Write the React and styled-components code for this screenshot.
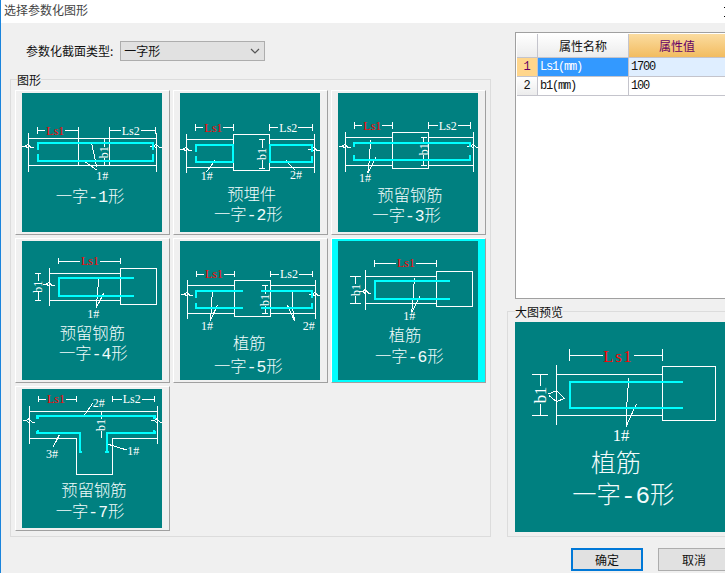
import React from "react";
import styled, { createGlobalStyle } from "styled-components";

const Global = createGlobalStyle`
  html, body { margin: 0; padding: 0; background: #f0f0f0; }
  * { box-sizing: border-box; }
`;

const UI_FONT = `"Noto Sans CJK SC", "Liberation Sans", sans-serif`;
const DRAW_FONT = `"Liberation Serif", "Noto Sans CJK SC", serif`;

const Page = styled.div`
  width: 725px;
  height: 573px;
  overflow: hidden;
`;
const Dialog = styled.div`
  width: 736px;
  height: 573px;
  display: flex;
  flex-direction: column;
  background: #f0f0f0;
  border-left: 1px solid #1a84dc;
  font: 12px/16px ${UI_FONT};
  color: #111;
`;
const TitleBar = styled.div`
  height: 23px;
  flex: none;
  background: #fff;
  display: flex;
  align-items: center;
  justify-content: space-between;
  padding: 0 2px 3px 3px;
  color: #444;
`;
const CloseIcon = styled.svg`
  width: 10px;
  height: 10px;
  margin-top: 4px;
`;
const Body = styled.div`
  display: flex;
  height: 514px;
  flex: none;
`;
const LeftPane = styled.div`
  width: 481px;
  margin-left: 9px;
  display: flex;
  flex-direction: column;
`;
const TypeRow = styled.div`
  display: flex;
  align-items: flex-start;
  gap: 7px;
  padding: 18px 0 0 16px;
  height: 49px;
  flex: none;
`;
const TypeLabel = styled.span`
  line-height: 20px;
`;
const Combo = styled.div`
  width: 145px;
  height: 20px;
  background: #e1e1e1;
  border: 1px solid #adadad;
  display: flex;
  align-items: center;
  justify-content: space-between;
  padding: 0 4px 0 3px;
`;
const Group = styled.fieldset`
  margin: 0;
  min-width: 0;
  border: 1px solid #dcdcdc;
  height: ${(p) => p.$h}px;
  padding: ${(p) => p.$pad};
  width: 100%;
`;
const GroupTitle = styled.legend`
  padding: 0;
  margin-left: ${(p) => p.$ml}px;
  line-height: 15px;
  font-size: 12px;
  color: #111;
`;
const Grid = styled.div`
  display: grid;
  grid-template-columns: repeat(3, 155px);
  grid-auto-rows: 145px;
  gap: 3px;
`;
const Card = styled.div`
  padding: 2px 7px 2px 6px;
  border: 1px solid #a0a0a0;
  border-top-color: #fff;
  border-left-color: #fff;
  background: ${(p) => (p.$active ? "#00ffff" : "#f0f0f0")};
`;
const Canvas = styled.svg`
  display: block;
  background: #008080;
  width: ${(p) => p.$w}px;
  height: ${(p) => p.$h}px;
  shape-rendering: crispEdges;
`;
const Stroke = styled.path`
  fill: none;
  stroke: ${(p) => p.$color};
  stroke-width: ${(p) => p.$width};
`;
const Tag = styled.text`
  font-family: ${DRAW_FONT};
  font-size: ${(p) => p.$size}px;
  fill: ${(p) => p.$color};
  text-anchor: middle;
  dominant-baseline: central;
`;
const Caption = styled.text`
  font-family: "Liberation Mono", "Noto Sans CJK SC", monospace;
  font-weight: 300;
  font-size: ${(p) => p.$size}px;
  fill: #f2fbfb;
  text-anchor: middle;
`;
const RightPane = styled.div`
  margin-left: 16px;
  width: 219px;
  display: flex;
  flex-direction: column;
`;
const Table = styled.div`
  margin: 9px 0 0 8px;
  height: 267px;
  flex: none;
  border: 1px solid #a0a0a0;
  border-right: 0;
  background: #fff;
  padding: 1px 0 0 1px;
  display: grid;
  grid-template-columns: 21px 91px 1fr;
  grid-template-rows: 24px 19px 19px;
  align-content: start;
`;
const Cell = styled.div`
  display: flex;
  align-items: center;
  justify-content: ${(p) => (p.$center ? "center" : "flex-start")};
  border-right: 1px solid #c4c4cc;
  border-bottom: 1px solid #c4c4cc;
  padding-left: ${(p) => (p.$center ? 0 : 2)}px;
  font-family: "Liberation Mono", "Noto Sans CJK SC", monospace;
  font-size: 12px;
  letter-spacing: ${(p) => (p.$center ? 0 : -1.2)}px;
  color: ${(p) => p.$color || "#111"};
  background: ${(p) => p.$bg || "#fff"};
`;
const HeadCell = styled.div`
  display: flex;
  align-items: center;
  justify-content: center;
  border-right: 1px solid #c4c4cc;
  border-bottom: 1px solid #c4c4cc;
  font-size: 12px;
  color: ${(p) => p.$color || "#111"};
  background: ${(p) => p.$bg};
`;
const PreviewGroup = styled(Group)`
  margin-top: 5px;
`;
const Footer = styled.div`
  flex: none;
  display: flex;
  gap: 15px;
  padding: 11px 0 0 570px;
`;
const Button = styled.div`
  width: 72px;
  height: 23px;
  background: #e1e1e1;
  display: flex;
  align-items: center;
  justify-content: center;
  border: ${(p) => (p.$primary ? "2px solid #0078d7" : "1px solid #adadad")};
`;

const hDim = (x1, x2, y, c, w, t = 10) =>
  `M${x1} ${y - t}V${y + t}M${x2} ${y - t}V${y + t}M${x1} ${y}H${c - w}M${c + w} ${y}H${x2}`;
const vDim = (x, y1, y2, c, w, t = 9) =>
  `M${x - t} ${y1}H${x + t}M${x - t} ${y2}H${x + t}M${x} ${y1}V${c - w}M${x} ${c + w}V${y2}`;
const brk = (x, y) =>
  `M${x - 19} ${y - 3}H${x - 9}L${x - 2} ${y - 8}L${x + 9} ${y + 2}H${x + 17}M${x - 9} ${y - 3}L${x - 2} ${y + 3}`;

const diagrams = [
  {
    white: [
      hDim(46, 170, 113, 100, 30), hDim(262, 399, 113, 326, 30),
      "M19 136H404M19 217H404M19 121V237M404 121V237M170 106V217M262 106V217",
      "M247 136V161M247 195V217",
      brk(19, 162), brk(404, 162),
      "M209 151L224 221M189 206L224 231",
    ],
    cyan: ["M47 170V149H394V170M47 182V203H394V182"],
    red: [[100, 113]],
    tags: [[326, 113, "Ls2"], [241, 249, "1#"]],
    rot: [[247, 178]],
    caption: [[204, 326, "一字-1形"]],
  },
  {
    white: [
      hDim(47, 161, 104, 100, 30), hDim(268, 398, 104, 325, 30),
      "M160 124H268V232H160ZM19 140H160M268 140H403M19 224H160M268 224H403M19 124V240M403 124V240",
      vDim(247, 138, 226, 183, 17),
      brk(19, 171), brk(403, 171),
      "M105 203L80 236M318 203L345 231",
    ],
    cyan: ["M47 178V155H158V207H47V190", "M395 178V155H270V207H395V190"],
    red: [[100, 104]],
    tags: [[325, 104, "Ls2"], [80, 249, "1#"], [348, 246, "2#"]],
    rot: [[247, 183]],
    caption: [[215, 320, "预埋件"], [205, 380, "一字-2形"]],
  },
  {
    white: [
      hDim(49, 164, 98, 103, 30), hDim(271, 398, 98, 329, 30),
      "M163 118H272V226H163ZM22 133H163M272 133H407M22 217H163M272 217H407M22 118V236M407 118V236",
      vDim(257, 133, 217, 169, 17),
      brk(22, 162), brk(407, 162),
      "M97 141L95 196L89 241M113 193L89 241",
    ],
    cyan: ["M48 161V150H397V161M48 186V200H397V186"],
    red: [[103, 98]],
    tags: [[329, 98, "Ls2"], [81, 254, "1#"]],
    rot: [[257, 169]],
    caption: [[216, 323, "预留钢筋"], [206, 385, "一字-3形"]],
  },
  {
    white: [
      hDim(110, 295, 60, 204, 30),
      "M295 82H403V190H295ZM82 97H295M82 178H295M82 81V196",
      vDim(49, 97, 178, 137, 17),
      brk(82, 132),
      "M230 107L227 157L222 202M245 157L222 202",
    ],
    cyan: ["M336 110H110V164H336"],
    red: [[204, 60]],
    tags: [[214, 219, "1#"]],
    rot: [[49, 137]],
    caption: [[211, 293, "预留钢筋"], [214, 353, "一字-4形"]],
  },
  {
    white: [
      hDim(50, 163, 99, 102, 30), hDim(272, 398, 99, 327, 30),
      "M163 118H271V226H163ZM22 133H163M271 133H406M22 218H163M271 218H406M22 118V235M406 118V235",
      vDim(255, 133, 218, 177, 17),
      brk(22, 162), brk(406, 162),
      "M97 150L94 207L90 240M113 192L90 240M337 150V197L344 240M322 192L344 240",
    ],
    cyan: ["M47 172V150H188M47 186V200H188", "M243 150H397V172M243 200H397V186"],
    red: [[102, 99]],
    tags: [[327, 99, "Ls2"], [81, 254, "1#"], [386, 254, "2#"]],
    rot: [[255, 177]],
    caption: [[208, 323, "植筋"], [205, 393, "一字-5形"]],
  },
  {
    white: [
      hDim(109, 296, 67, 204, 30),
      "M295 91H404V197H295ZM83 106H295M83 188H295M83 87V206",
      vDim(53, 106, 188, 147, 17, 16),
      brk(83, 154),
      "M229 110L226 167L221 214M246 165L221 214",
    ],
    cyan: ["M335 119H110V173H335"],
    red: [[204, 67]],
    tags: [[214, 224, "1#"]],
    rot: [[53, 147]],
    caption: [[201, 301, "植筋"], [214, 364, "一字-6形"]],
  },
  {
    white: [
      hDim(50, 164, 30, 102, 30), hDim(272, 398, 30, 329, 30),
      "M22 67H406M22 148H164M272 148H406M22 52V166M406 52V166M164 148V256H272V148",
      "M238 67V90M238 126V148",
      brk(22, 98), brk(406, 98),
      "M186 80L212 43M112 138L94 173M259 166L314 183",
    ],
    cyan: [
      "M44 90V80H400V90", "M44 125V133H174V193", "M400 125V133H254V193",
      "M170 190H180M250 190H260", "M44 86H52M392 86H400M44 127H52M392 127H400",
    ],
    red: [[102, 30]],
    tags: [[329, 30, "Ls2"], [230, 41, "2#"], [90, 195, "3#"], [334, 185, "1#"]],
    rot: [[238, 108]],
    caption: [[216, 322, "预留钢筋"], [204, 384, "一字-7形"]],
  },
];

const big = {
  white: [
    hDim(164, 442, 100, 310, 46, 18),
    "M442 133H602V295H442ZM125 157H442M125 280H442M125 129V309",
    vDim(75, 157, 280, 219, 28, 25),
    "M100 216L125 206L148 229L125 239L102 221",
    "M341 169L335 254L333 314M364 246L333 314",
  ],
  cyan: ["M503 179H165V258H503"],
};

function Drawing({ spec }) {
  return (
    <Canvas $w={140} $h={139} viewBox="0 0 420 417">
      {spec.white.map((d, i) => <Stroke key={i} d={d} $color="#ffffff" $width={3} />)}
      {spec.cyan.map((d, i) => <Stroke key={i} d={d} $color="#00ffff" $width={6} />)}
      {spec.red.map(([x, y], i) => (
        <Tag key={i} x={x} y={y} $size={36} $color="#ff0000">Ls1</Tag>
      ))}
      {spec.tags.map(([x, y, t], i) => (
        <Tag key={i} x={x} y={y} $size={36} $color="#ffffff">{t}</Tag>
      ))}
      {spec.rot.map(([x, y], i) => (
        <Tag key={i} x={x} y={y} $size={36} $color="#ffffff" transform={`rotate(-90 ${x} ${y})`}>b1</Tag>
      ))}
      {spec.caption.map(([x, y, t], i) => (
        <Caption key={i} x={x} y={y} $size={49}>{t}</Caption>
      ))}
    </Canvas>
  );
}

function BigPreview() {
  return (
    <Canvas $w={218} $h={210} viewBox="0 0 654 630">
      {big.white.map((d, i) => <Stroke key={i} d={d} $color="#ffffff" $width={3} />)}
      {big.cyan.map((d, i) => <Stroke key={i} d={d} $color="#00ffff" $width={6} />)}
      <Tag x={310} y={102} $size={50} $color="#ff0000" letterSpacing="5">Ls1</Tag>
      <Tag x={318} y={340} $size={50} $color="#ffffff">1#</Tag>
      <Tag x={75} y={219} $size={50} $color="#ffffff" transform="rotate(-90 75 219)">b1</Tag>
      <Caption x={303} y={449} $size={75}>植筋</Caption>
      <Caption x={325} y={544} $size={73}>一字-6形</Caption>
    </Canvas>
  );
}

const headGrad = "linear-gradient(#ffffff, #ececec)";
const hotGrad = "linear-gradient(#fbdca0, #f2bc60)";

export default function App() {
  return (
    <Page>
      <Global />
      <Dialog>
        <TitleBar>
          <span>选择参数化图形</span>
          <CloseIcon viewBox="0 0 10 10">
            <path d="M0 0L10 10M10 0L0 10" stroke="#000" strokeWidth="1" />
          </CloseIcon>
        </TitleBar>
        <Body>
          <LeftPane>
            <TypeRow>
              <TypeLabel>参数化截面类型:</TypeLabel>
              <Combo>
                <span>一字形</span>
                <svg width="10" height="6" viewBox="0 0 10 6">
                  <path d="M1 1L5 5L9 1" fill="none" stroke="#555" strokeWidth="1.2" />
                </svg>
              </Combo>
            </TypeRow>
            <Group $h={465} $pad="3px 0 0 4px">
              <GroupTitle $ml={2}>图形</GroupTitle>
              <Grid>
                {diagrams.map((d, i) => (
                  <Card key={i} $active={i === 5}>
                    <Drawing spec={d} />
                  </Card>
                ))}
              </Grid>
            </Group>
          </LeftPane>
          <RightPane>
            <Table>
              <HeadCell $bg={headGrad} />
              <HeadCell $bg={headGrad}>属性名称</HeadCell>
              <HeadCell $bg={hotGrad} $color="#660066">属性值</HeadCell>
              <Cell $center $bg="#ffd68c" $color="#660066">1</Cell>
              <Cell $bg="#3399ff" $color="#fff">Ls1(mm)</Cell>
              <Cell $bg="#dfeeff">1700</Cell>
              <Cell $center $bg={headGrad}>2</Cell>
              <Cell>b1(mm)</Cell>
              <Cell>100</Cell>
            </Table>
            <PreviewGroup $h={234} $pad="3px 0 0 7px">
              <GroupTitle $ml={0}>大图预览</GroupTitle>
              <BigPreview />
            </PreviewGroup>
          </RightPane>
        </Body>
        <Footer>
          <Button $primary>确定</Button>
          <Button>取消</Button>
        </Footer>
      </Dialog>
    </Page>
  );
}
